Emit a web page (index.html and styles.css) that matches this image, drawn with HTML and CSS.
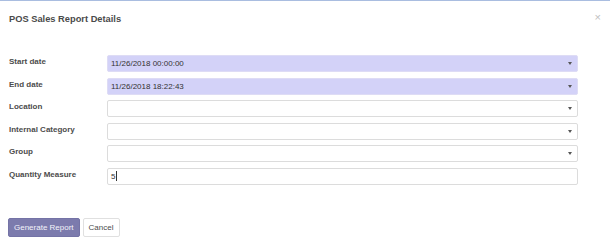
FILE: index.html
```html
<!DOCTYPE html>
<html lang="en-US">
  <head>
    <meta charset="utf-8">
    <meta name="viewport" content="width=device-width, initial-scale=1.0">
    <title>POS Sales Report Details</title>
    <link rel="stylesheet" href="styles.css">
  </head>
  <body>

    <div class="modal">
      <!-- Header -->
      <div class="modal-header">
        <h4 class="modal-title">POS Sales Report Details</h4>
        <span class="close">&times;</span>
      </div>

      <!-- Form -->
      <div class="modal-body">
        <div class="row">
          <label class="field-label">Start date</label>
          <div class="field field-required">
            <span class="field-value">11/26/2018 00:00:00</span>
            <span class="caret"></span>
          </div>
        </div>
        <div class="row">
          <label class="field-label">End date</label>
          <div class="field field-required">
            <span class="field-value">11/26/2018 18:22:43</span>
            <span class="caret"></span>
          </div>
        </div>
        <div class="row">
          <label class="field-label">Location</label>
          <div class="field">
            <span class="field-value"></span>
            <span class="caret"></span>
          </div>
        </div>
        <div class="row">
          <label class="field-label">Internal Category</label>
          <div class="field">
            <span class="field-value"></span>
            <span class="caret"></span>
          </div>
        </div>
        <div class="row">
          <label class="field-label">Group</label>
          <div class="field">
            <span class="field-value"></span>
            <span class="caret"></span>
          </div>
        </div>
        <div class="row">
          <label class="field-label">Quantity Measure</label>
          <div class="field">
            <span class="field-value">5<span class="cursor"></span></span>
          </div>
        </div>
      </div>

      <!-- Footer -->
      <div class="modal-footer">
        <button class="btn btn-primary">Generate Report</button>
        <button class="btn btn-default">Cancel</button>
      </div>
    </div>

  </body>
</html>
```

FILE: styles.css
```css
body {
  margin: 0;
  background-color: #fff;
  font-family: "Liberation Sans", Arial, sans-serif;
  color: #4c4c4c;
}

.modal {
  border-top: 1px solid #a9bde0;
  height: 246px;
}

.modal-header {
  display: flex;
  justify-content: space-between;
  align-items: flex-start;
  padding: 12px 9px 0 9px;
  height: 12px;
}

.modal-title {
  margin: 0;
  font-size: 9.3px;
  line-height: 12px;
  font-weight: bold;
  color: #4a4a4a;
}

.close {
  font-size: 11px;
  line-height: 8px;
  color: #c0c0c0;
  padding-top: 0;
}

.modal-body {
  padding: 30px 32px 0 9px;
}

.row {
  display: flex;
  align-items: flex-start;
  height: 17px;
  margin-bottom: 5.6px;
}

.field-label {
  width: 98px;
  flex: none;
  font-size: 8px;
  line-height: 13px;
  font-weight: bold;
  color: #4c4c4c;
}

.field {
  flex: 1;
  height: 15px;
  display: flex;
  align-items: center;
  justify-content: space-between;
  padding: 0 5px 0 3px;
  border: 1px solid #dcdcdc;
  border-radius: 2px;
  background-color: #fff;
}

.field-required {
  background-color: #d3d2f8;
  border-color: #dedcf5;
}

.field-value {
  font-size: 8px;
  color: #333;
  display: flex;
  align-items: center;
}

.cursor {
  display: inline-block;
  width: 1px;
  height: 10px;
  margin-left: 0.5px;
  background-color: #333;
}

.caret {
  width: 0;
  height: 0;
  border-left: 2.5px solid transparent;
  border-right: 2.5px solid transparent;
  border-top: 3px solid #555;
}

.modal-footer {
  display: flex;
  gap: 3px;
  padding: 27.5px 9px 0 8px;
}

.btn {
  height: 19px;
  font-family: "Liberation Sans", Arial, sans-serif;
  font-size: 8px;
  border-radius: 2px;
  padding: 0 5px;
  cursor: pointer;
}

.btn-primary {
  background-color: #7c7bad;
  border: 1px solid #7473a6;
  color: #f3f3fa;
}

.btn-default {
  background-color: #fff;
  border: 1px solid #e0e0e0;
  color: #4c4c4c;
}
```
